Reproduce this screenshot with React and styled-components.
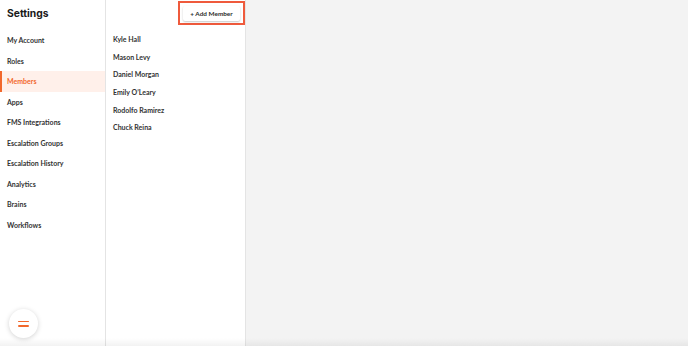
import React from 'react';
import styled, { createGlobalStyle } from 'styled-components';

const GlobalStyle = createGlobalStyle`
  *, *::before, *::after {
    box-sizing: border-box;
  }
  html, body, #root {
    margin: 0;
    padding: 0;
    height: 100%;
  }
  body {
    font-family: 'Lato', 'Open Sans', sans-serif;
    color: #2b2b2b;
    background: #f3f3f3;
    overflow: hidden;
  }
`;

const Page = styled.div`
  display: flex;
  height: 346px;
  width: 688px;
  position: relative;
  overflow: hidden;
`;

const Sidebar = styled.nav`
  width: 106px;
  flex-shrink: 0;
  background: #fff;
  border-right: 1px solid #e4e4e4;
  display: flex;
  flex-direction: column;
  position: relative;
`;

const Title = styled.h1`
  margin: 0;
  padding: 7px 0 0 7px;
  height: 27px;
  font-family: 'Inter', 'Liberation Sans', sans-serif;
  font-size: 10.3px;
  font-weight: 700;
  color: #1a1a1a;
`;

const Menu = styled.ul`
  list-style: none;
  margin: 3px 0 0;
  padding: 0;
`;

const MenuItem = styled.li`
  height: 20.5px;
  display: flex;
  align-items: center;
  padding-left: ${(p) => (p.$active ? '5px' : '7px')};
  font-size: 7px;
  font-weight: 700;
  color: ${(p) => (p.$active ? '#f2682c' : '#333')};
  background: ${(p) => (p.$active ? '#fff0ea' : 'transparent')};
  border-left: ${(p) => (p.$active ? '2px solid #f2682c' : 'none')};
`;

const Fab = styled.button`
  position: absolute;
  left: 9px;
  bottom: 8px;
  width: 29px;
  height: 29px;
  border-radius: 50%;
  border: none;
  background: #fff;
  box-shadow: 0 1px 5px rgba(0, 0, 0, 0.18);
  display: flex;
  flex-direction: column;
  align-items: center;
  justify-content: center;
  gap: 3px;
  padding: 0;
`;

const FabLine = styled.span`
  display: block;
  width: 11px;
  height: 1.5px;
  background: #f2682c;
  border-radius: 1px;
`;

const MemberPanel = styled.section`
  width: 140px;
  flex-shrink: 0;
  background: #fff;
  border-right: 1px solid #e4e4e4;
  display: flex;
  flex-direction: column;
`;

const Toolbar = styled.div`
  display: flex;
  justify-content: flex-end;
  padding-top: 1px;
`;

const Highlight = styled.div`
  display: flex;
  flex-shrink: 0;
  border: 2px solid #ef5a3c;
  padding: 3px 3px 2px 3px;
  width: 67px;
  height: 24px;
`;

const AddButton = styled.button`
  flex: 1;
  height: 15px;
  border: none;
  border-radius: 2px;
  background: #fff;
  box-shadow: 0 1px 2px rgba(0, 0, 0, 0.22);
  font-family: 'Lato', 'Open Sans', sans-serif;
  font-size: 6.4px;
  font-weight: 700;
  color: #2b2b2b;
  padding: 0;
  margin: 0;
`;

const MemberList = styled.ul`
  list-style: none;
  margin: 5px 0 0;
  padding: 0 0 0 7px;
`;

const Member = styled.li`
  height: 17.7px;
  display: flex;
  align-items: center;
  font-size: 7px;
  font-weight: 700;
  color: #333;
`;

const Content = styled.main`
  flex: 1;
  background: #f3f3f3;
`;

const BottomShade = styled.div`
  position: absolute;
  left: 0;
  right: 0;
  bottom: 0;
  height: 8px;
  background: linear-gradient(to bottom, rgba(0, 0, 0, 0), rgba(0, 0, 0, 0.05));
  pointer-events: none;
`;

const menu = [
  'My Account',
  'Roles',
  'Members',
  'Apps',
  'FMS Integrations',
  'Escalation Groups',
  'Escalation History',
  'Analytics',
  'Brains',
  'Workflows',
];

const members = [
  'Kyle Hall',
  'Mason Levy',
  'Daniel Morgan',
  'Emily O\u2019Leary',
  'Rodolfo Ramirez',
  'Chuck Reina',
];

export default function App() {
  return (
    <>
      <GlobalStyle />
      <Page>
        <Sidebar>
          <Title>Settings</Title>
          <Menu>
            {menu.map((m) => (
              <MenuItem key={m} $active={m === 'Members'}>
                {m}
              </MenuItem>
            ))}
          </Menu>
          <Fab aria-label="menu">
            <FabLine />
            <FabLine />
          </Fab>
        </Sidebar>
        <MemberPanel>
          <Toolbar>
            <Highlight>
              <AddButton>+ Add Member</AddButton>
            </Highlight>
          </Toolbar>
          <MemberList>
            {members.map((m) => (
              <Member key={m}>{m}</Member>
            ))}
          </MemberList>
        </MemberPanel>
        <Content />
        <BottomShade />
      </Page>
    </>
  );
}
